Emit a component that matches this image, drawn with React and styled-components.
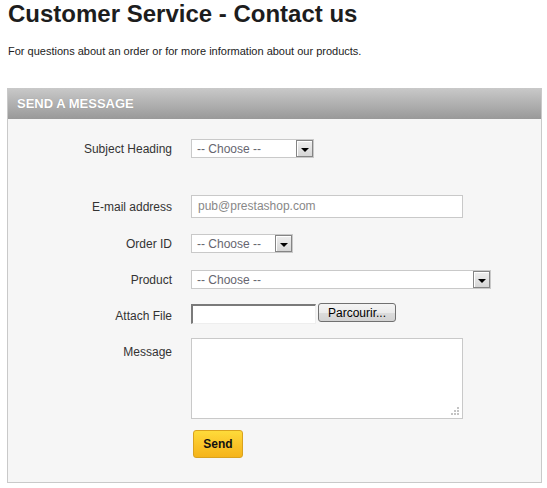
import styled, { createGlobalStyle } from "styled-components"

const GlobalStyle = createGlobalStyle`
  body {
    margin: 0;
    background: #ffffff;
    font-family: "Liberation Sans", Arial, sans-serif;
    color: #333333;
  }
`

const Page = styled.div`
  width: 547px;
  padding-top: 2px;
`

const Title = styled.h1`
  margin: 0 0 19px 8px;
  font-size: 24px;
  line-height: 24px;
  font-weight: bold;
  color: #1d1d1d;
`

const Intro = styled.p`
  margin: 0 0 30px 8px;
  font-size: 11px;
  line-height: 13px;
  color: #222222;
`

const Panel = styled.div`
  margin-left: 7px;
  width: 533px;
  border: 1px solid #c9c9c9;
  border-top: none;
  background: #f6f6f6;
`

const PanelHeader = styled.h3`
  margin: 0;
  height: 31px;
  line-height: 31px;
  padding-left: 9px;
  font-size: 13px;
  font-weight: bold;
  text-transform: uppercase;
  color: #ffffff;
  background: linear-gradient(to bottom, #c9c9c9 0%, #b1b1b1 50%, #999999 100%);
  text-shadow: 0 0 1px rgba(0, 0, 0, 0.2);
`

const Form = styled.div`
  display: flex;
  flex-direction: column;
  padding: 20px 0 24px 0;
`

const Row = styled.div`
  display: grid;
  grid-template-columns: 164px 1fr;
  column-gap: 19px;
  align-items: ${(p) => (p.$top ? "start" : "center")};
  margin-top: ${(p) => p.$mt || 0}px;
`

const Label = styled.label`
  text-align: right;
  font-size: 12px;
  line-height: 14px;
  color: #333333;
  padding-top: ${(p) => p.$pt || 0}px;
`

const Select = styled.div`
  box-sizing: border-box;
  width: ${(p) => p.$w}px;
  height: 19px;
  border: 1px solid #c9c9c9;
  background: #ffffff;
  display: flex;
  align-items: center;
  justify-content: space-between;
`

const SelectText = styled.span`
  padding-left: 5px;
  font-size: 12px;
  color: #666670;
`

const ArrowBox = styled.span`
  box-sizing: border-box;
  width: 17px;
  height: 17px;
  border: 1px solid #858585;
  background: linear-gradient(to bottom, #efefef, #d6d6d6);
  box-shadow: inset 1px 1px 0 #ffffff;
  display: flex;
  align-items: center;
  justify-content: center;
  padding-top: 2px;

  &::after {
    content: "";
    width: 0;
    height: 0;
    border-left: 4px solid transparent;
    border-right: 4px solid transparent;
    border-top: 4px solid #000000;
  }
`

const TextInput = styled.div`
  box-sizing: border-box;
  width: 272px;
  height: 23px;
  border: 1px solid #c9c9c9;
  background: #ffffff;
  padding-left: 6px;
  font-size: 12px;
  line-height: 21px;
  color: #888888;
`

const FileWrap = styled.div`
  display: flex;
  align-items: flex-start;
  gap: 2px;
`

const FileField = styled.div`
  box-sizing: border-box;
  width: 125px;
  height: 20px;
  margin-top: 1px;
  background: #ffffff;
  border-top: 2px solid #7a7a7a;
  border-left: 2px solid #7a7a7a;
  border-right: 1px solid #eeeeee;
  border-bottom: 1px solid #eeeeee;
`

const BrowseButton = styled.button`
  box-sizing: border-box;
  width: 78px;
  height: 19px;
  padding: 0;
  border: 1px solid #707070;
  border-radius: 3px;
  background: linear-gradient(to bottom, #f4f4f4 0%, #ebebeb 50%, #dcdcdc 51%, #d2d2d2 100%);
  font-family: "Liberation Sans", Arial, sans-serif;
  font-size: 12px;
  line-height: 16px;
  color: #000000;
`

const TextArea = styled.div`
  position: relative;
  box-sizing: border-box;
  width: 272px;
  height: 81px;
  border: 1px solid #c9c9c9;
  background: #ffffff;
`

const Grip = styled.svg`
  position: absolute;
  right: 3px;
  bottom: 3px;
`

const SendButton = styled.button`
  box-sizing: border-box;
  margin-left: 2px;
  width: 50px;
  height: 28px;
  padding: 0;
  border: 1px solid #d9a21f;
  border-radius: 3px;
  background: linear-gradient(to bottom, #fedb3a 0%, #fbc52a 50%, #f5b41a 100%);
  font-family: "Liberation Sans", Arial, sans-serif;
  font-size: 12px;
  font-weight: bold;
  color: #111111;
`

const ChooseSelect = ({ width }) => (
  <Select $w={width}>
    <SelectText>-- Choose --</SelectText>
    <ArrowBox />
  </Select>
)

const App = () => {
  return (
    <Page>
      <GlobalStyle />
      <Title>Customer Service - Contact us</Title>
      <Intro>For questions about an order or for more information about our products.</Intro>
      <Panel>
        <PanelHeader>Send a message</PanelHeader>
        <Form>
          <Row>
            <Label>Subject Heading</Label>
            <ChooseSelect width={123} />
          </Row>
          <Row $mt={37}>
            <Label>E-mail address</Label>
            <TextInput>pub@prestashop.com</TextInput>
          </Row>
          <Row $mt={16}>
            <Label>Order ID</Label>
            <ChooseSelect width={102} />
          </Row>
          <Row $mt={17}>
            <Label>Product</Label>
            <ChooseSelect width={300} />
          </Row>
          <Row $mt={14} $top>
            <Label $pt={6}>Attach File</Label>
            <FileWrap>
              <FileField />
              <BrowseButton>Parcourir...</BrowseButton>
            </FileWrap>
          </Row>
          <Row $mt={14} $top>
            <Label $pt={7}>Message</Label>
            <TextArea>
              <Grip width="9" height="9" viewBox="0 0 9 9">
                <rect x="7" y="1" width="2" height="2" fill="#c4c4c4" />
                <rect x="4" y="4" width="2" height="2" fill="#c4c4c4" />
                <rect x="7" y="4" width="2" height="2" fill="#c4c4c4" />
                <rect x="1" y="7" width="2" height="2" fill="#c4c4c4" />
                <rect x="4" y="7" width="2" height="2" fill="#c4c4c4" />
                <rect x="7" y="7" width="2" height="2" fill="#c4c4c4" />
              </Grip>
            </TextArea>
          </Row>
          <Row $mt={11}>
            <span />
            <div>
              <SendButton>Send</SendButton>
            </div>
          </Row>
        </Form>
      </Panel>
    </Page>
  )
}

export default App
